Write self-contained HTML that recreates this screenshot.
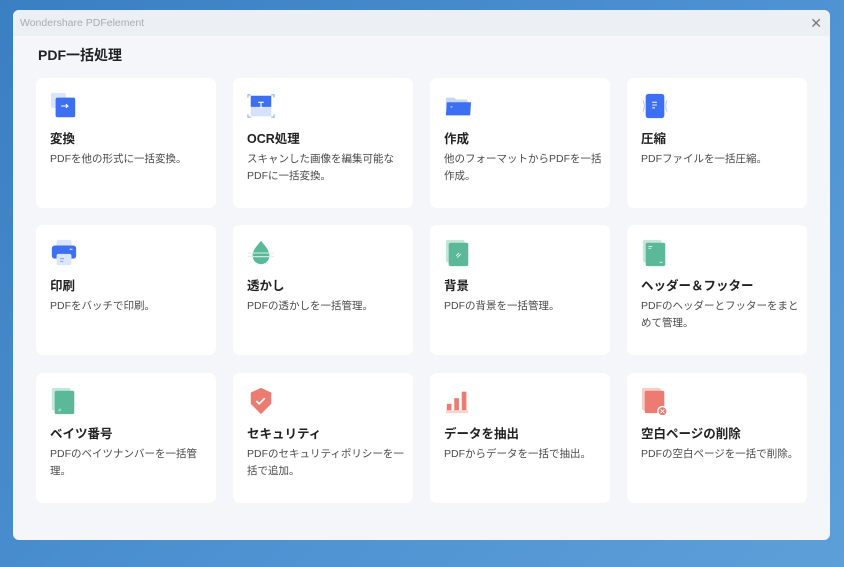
<!DOCTYPE html>
<html><head><meta charset="utf-8"><style>
*{margin:0;padding:0;box-sizing:border-box}
body{width:844px;height:567px;overflow:hidden;background:linear-gradient(135deg,#3a7fc2,#4f93d3 60%,#5d9fd8);font-family:"Liberation Sans","Noto Sans CJK JP",sans-serif;position:relative}
.win{position:absolute;left:13px;top:10px;width:817px;height:530px;background:#f5f6fa;border-radius:6px;overflow:hidden}
.tb{height:26px;background:#eceff3;color:#a9adb3;font-size:10.5px;line-height:26px;padding-left:7px;position:relative}
.x{position:absolute;right:8px;top:0;font-size:14px;color:#777}
h1{position:absolute;left:25px;top:35px;font-size:14px;font-weight:bold;color:#222}
.card{position:absolute;width:180px;height:130px;background:#fff;border-radius:7px}
.ic{position:absolute;left:14px;top:14px;width:28px;height:28px}
.t{position:absolute;left:14px;top:50px;font-size:12.5px;font-weight:bold;color:#222}
.d{position:absolute;left:14px;top:73px;width:160px;font-size:10.5px;line-height:17px;color:#4a4a4a}
</style></head><body>
<div class="win">
<div class="tb">Wondershare PDFelement<span class="x">✕</span></div>
<h1>PDF一括処理</h1>

<div class="card" style="left:23px;top:68px"><svg class="ic" viewBox="0 0 30 30"><rect x="1" y="1" width="16" height="16" rx="2" fill="#dbe5fb"/><rect x="6" y="6" width="21" height="21" rx="2" fill="#3d6ff2"/><path d="M12 15h7l-2-2M19 15l-2 2" stroke="#fff" stroke-width="1.2" fill="none"/></svg><div class="t">変換</div><div class="d">PDFを他の形式に一括変換。</div></div>
<div class="card" style="left:220px;top:68px"><svg class="ic" viewBox="0 0 30 30"><rect x="4" y="4" width="22" height="12" fill="#3d6ff2"/><rect x="4" y="16" width="22" height="10" fill="#d6e2fb"/><path d="M1 6V3h3M26 3h3v3M1 24v3h3M26 27h3v-3" stroke="#8fb0f5" stroke-width="1.2" fill="none"/><path d="M12 11h6M15 11v7" stroke="#fff" stroke-width="1.2"/></svg><div class="t">OCR処理</div><div class="d">スキャンした画像を編集可能なPDFに一括変換。</div></div>
<div class="card" style="left:417px;top:68px"><svg class="ic" viewBox="0 0 30 30"><path d="M2 6h9l2 2h12v8H2z" fill="#c7d7fb"/><path d="M3 11h26l-1 14H2z" fill="#3d6ff2"/><path d="M7 16h2" stroke="#fff"/></svg><div class="t">作成</div><div class="d">他のフォーマットからPDFを一括作成。</div></div>
<div class="card" style="left:614px;top:68px"><svg class="ic" viewBox="0 0 30 30"><path d="M2 9c2 3 2 9 0 12M28 9c-2 3-2 9 0 12" stroke="#a9c1f7" fill="none"/><rect x="5" y="2" width="20" height="26" rx="3" fill="#3d6ff2"/><path d="M12 11h5M12 14h5M12 17h3" stroke="#fff"/></svg><div class="t">圧縮</div><div class="d">PDFファイルを一括圧縮。</div></div>

<div class="card" style="left:23px;top:215px"><svg class="ic" viewBox="0 0 30 30"><rect x="7" y="1" width="16" height="8" rx="2" fill="#dbe5fb"/><rect x="2" y="7" width="26" height="14" rx="3" fill="#3d6ff2"/><rect x="7" y="16" width="16" height="12" rx="2" fill="#dbe5fb"/><path d="M11 21h4M11 24h3" stroke="#7c9ff0"/><path d="M21 11h3" stroke="#fff"/></svg><div class="t">印刷</div><div class="d">PDFをバッチで印刷。</div></div>
<div class="card" style="left:220px;top:215px"><svg class="ic" viewBox="0 0 30 30"><path d="M15 2C10 8 6 12 6 18a9 9 0 0018 0c0-6-4-10-9-16z" fill="#5bb99a"/><path d="M1 15h28M1 19h28" stroke="#d8f0e7" stroke-width="1.2"/></svg><div class="t">透かし</div><div class="d">PDFの透かしを一括管理。</div></div>
<div class="card" style="left:417px;top:215px"><svg class="ic" viewBox="0 0 30 30"><rect x="2" y="1" width="20" height="24" rx="2" fill="#c5e7da"/><rect x="5" y="4" width="21" height="25" rx="2" fill="#5bb99a"/><path d="M13 18l3-3M14 20l4-4" stroke="#e6f6f0"/></svg><div class="t">背景</div><div class="d">PDFの背景を一括管理。</div></div>
<div class="card" style="left:614px;top:215px"><svg class="ic" viewBox="0 0 30 30"><rect x="2" y="1" width="20" height="24" rx="2" fill="#c5e7da"/><rect x="5" y="4" width="21" height="25" rx="2" fill="#5bb99a"/><path d="M8 8h4M8 10h3M20 25h3" stroke="#e6f6f0"/></svg><div class="t">ヘッダー＆フッター</div><div class="d">PDFのヘッダーとフッターをまとめて管理。</div></div>

<div class="card" style="left:23px;top:363px"><svg class="ic" viewBox="0 0 30 30"><rect x="2" y="1" width="20" height="24" rx="2" fill="#c5e7da"/><rect x="5" y="4" width="21" height="25" rx="2" fill="#5bb99a"/><text x="9" y="26" font-size="5" fill="#fff">#</text></svg><div class="t">ベイツ番号</div><div class="d">PDFのベイツナンバーを一括管理。</div></div>
<div class="card" style="left:220px;top:363px"><svg class="ic" viewBox="0 0 30 30"><path d="M15 1l11 5v12l-11 11L4 18V6z" fill="#ec7b72"/><path d="M10 15l3 3 6-6" stroke="#fff" stroke-width="1.8" fill="none"/></svg><div class="t">セキュリティ</div><div class="d">PDFのセキュリティポリシーを一括で追加。</div></div>
<div class="card" style="left:417px;top:363px"><svg class="ic" viewBox="0 0 30 30"><rect x="3" y="18" width="5" height="7" fill="#ec7b72"/><rect x="11" y="12" width="5" height="13" fill="#ec7b72"/><rect x="19" y="5" width="5" height="20" fill="#ec7b72"/><rect x="2" y="25" width="24" height="3" fill="#f9d3cf"/></svg><div class="t">データを抽出</div><div class="d">PDFからデータを一括で抽出。</div></div>
<div class="card" style="left:614px;top:363px"><svg class="ic" viewBox="0 0 30 30"><rect x="1" y="1" width="20" height="24" rx="2" fill="#f8cdc8"/><rect x="4" y="4" width="21" height="24" rx="2" fill="#ec7b72"/><circle cx="23" cy="26" r="5" fill="#ec7b72" stroke="#fff" stroke-width="1.5"/><path d="M21 24l4 4M25 24l-4 4" stroke="#fff"/></svg><div class="t">空白ページの削除</div><div class="d">PDFの空白ページを一括で削除。</div></div>
</div>
</body></html>
